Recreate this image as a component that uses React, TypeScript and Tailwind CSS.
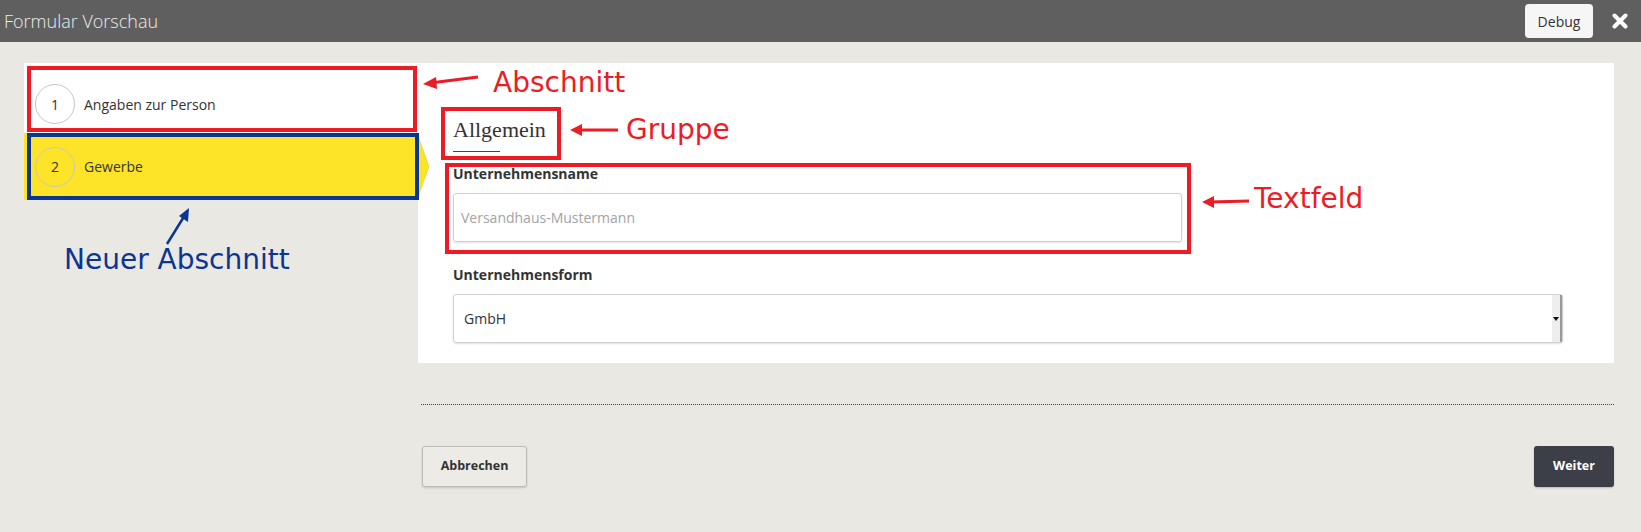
import React from 'react';

const ui = { fontFamily: '"Open Sans", "Noto Sans", sans-serif' };
const note = { fontFamily: '"DejaVu Sans", sans-serif' };

function Step({ n, label, active }: { n: number; label: string; active?: boolean }) {
  return (
    <div
      className={
        active
          ? 'relative flex items-center h-[67px] bg-[#fde428] z-10'
          : 'relative flex items-center h-[70px] pt-[12px] bg-white'
      }
    >
      <div className="ml-[11px] w-10 h-10 rounded-full border border-[#c9c6bf] flex items-center justify-center text-[14px] text-[#333]">
        {n}
      </div>
      <span className="ml-[9px] text-[14px] text-[#333]">{label}</span>
      {active && (
        <svg className="absolute right-[-12px] top-0" width="13" height="67" viewBox="0 0 13 67">
          <polygon points="0,0 12,33.5 0,67" fill="#fde428" stroke="#d9c84a" strokeWidth="0.6" />
        </svg>
      )}
    </div>
  );
}

function Annotations() {
  return (
    <>
      {/* boxes */}
      <div className="absolute left-[27px] top-[66px] w-[390px] h-[66px] border-4 border-[#ed1c24]" />
      <div className="absolute left-[27px] top-[133px] w-[392px] h-[67px] border-4 border-[#0b3592] z-20" />
      <div className="absolute left-[441px] top-[107px] w-[120px] h-[53px] border-4 border-[#ed1c24]" />
      <div className="absolute left-[445px] top-[163px] w-[746px] h-[91px] border-4 border-[#ed1c24]" />

      {/* labels */}
      <div style={note} className="absolute left-[493px] top-[69px] text-[28px] leading-none text-[#ed1c24]">
        Abschnitt
      </div>
      <div style={note} className="absolute left-[626px] top-[116px] text-[28px] leading-none text-[#ed1c24]">
        Gruppe
      </div>
      <div style={note} className="absolute left-[1254px] top-[185px] text-[28px] leading-none text-[#ed1c24]">
        Textfeld
      </div>
      <div style={note} className="absolute left-[64px] top-[246px] text-[28px] leading-none text-[#0b3592]">
        Neuer Abschnitt
      </div>

      {/* arrows */}
      <svg className="absolute left-0 top-0 pointer-events-none z-30" width="1641" height="532">
        <g stroke="#ed1c24" strokeWidth="3" fill="#ed1c24">
          <line x1="478" y1="77" x2="430" y2="83" />
          <polygon points="423,84 436,77 437,89" stroke="none" />
          <line x1="618" y1="130" x2="578" y2="130" />
          <polygon points="570,130 582,124 582,136" stroke="none" />
          <line x1="1249" y1="201" x2="1210" y2="202" />
          <polygon points="1202,202 1214,196 1214,208" stroke="none" />
        </g>
        <g stroke="#0b3592" strokeWidth="2.5" fill="#0b3592">
          <line x1="167" y1="244" x2="185" y2="215" />
          <polygon points="189,208 188,222 179,216" stroke="none" />
        </g>
      </svg>
    </>
  );
}

export default function App() {
  return (
    <div style={ui} className="relative w-full h-[532px] bg-[#e9e8e3] overflow-hidden">
      <header className="h-[42px] bg-[#5f5f5f] flex items-center justify-between">
        <span className="pl-[4px] text-[18px] font-light text-[#ececec]">Formular Vorschau</span>
        <div className="flex items-center">
          <button className="w-[68px] h-[34px] rounded-[4px] bg-[#f6f6f6] text-[14px] text-[#333]">Debug</button>
          <svg className="ml-[19px] mr-[13px]" width="16" height="16" viewBox="0 0 16 16">
            <path d="M2.5 2.5 L13.5 13.5 M13.5 2.5 L2.5 13.5" stroke="#fff" strokeWidth="4" strokeLinecap="round" />
          </svg>
        </div>
      </header>

      <div className="flex pl-[24px] pr-[27px] pt-[21px]">
        <nav className="w-[394px] shrink-0 flex flex-col">
          <Step n={1} label="Angaben zur Person" />
          <Step n={2} label="Gewerbe" active />
        </nav>

        <div className="flex-1 flex flex-col">
          <section className="bg-white pl-[35px] pr-[51px] pt-[54px] pb-[20px]">
            <h2 style={{ fontFamily: '"Liberation Serif", serif' }} className="text-[22px] leading-[26px] text-[#333]">
              Allgemein
            </h2>
            <div className="mt-[8px] w-[47px] h-px bg-[#444]" />

            <label className="block mt-[12px] text-[14px] leading-[20px] font-bold text-[#333]">Unternehmensname</label>
            <div className="mt-[9px] w-[729px] h-[49px] flex items-center pl-[7px] border border-[#cfcfcf] rounded-[3px] shadow-[0_1px_2px_rgba(0,0,0,0.12)] text-[14px] text-[#a3a3a3]">
              Versandhaus-Mustermann
            </div>

            <label className="block mt-[23px] text-[14px] leading-[20px] font-bold text-[#333]">Unternehmensform</label>
            <div className="mt-[9px] h-[49px] flex items-center border border-[#cfcfcf] rounded-[3px] shadow-[0_1px_2px_rgba(0,0,0,0.12)] text-[14px] text-[#333]">
              <span className="flex-1 pl-[10px]">GmbH</span>
              <div className="w-[10px] h-full bg-[#eeeeee] border-r-2 border-[#9a9a9a] flex items-center justify-center">
                <svg width="6" height="4" viewBox="0 0 6 4">
                  <polygon points="0,0 6,0 3,4" fill="#111" />
                </svg>
              </div>
            </div>
          </section>

          <div className="ml-[3px] mt-[41px] border-t border-dotted border-[#444]" />

          <div className="ml-[4px] mt-[41px] flex items-center justify-between">
            <button className="w-[105px] h-[41px] rounded-[3px] border border-[#bdbbb5] bg-[#ecebe6] shadow-[0_1px_2px_rgba(0,0,0,0.15)] text-[12.5px] font-bold text-[#333]">
              Abbrechen
            </button>
            <button className="w-[80px] h-[41px] rounded-[3px] bg-[#3d3f48] shadow-[0_1px_2px_rgba(0,0,0,0.2)] text-[12.5px] font-bold text-white">
              Weiter
            </button>
          </div>
        </div>
      </div>

      <Annotations />
    </div>
  );
}
